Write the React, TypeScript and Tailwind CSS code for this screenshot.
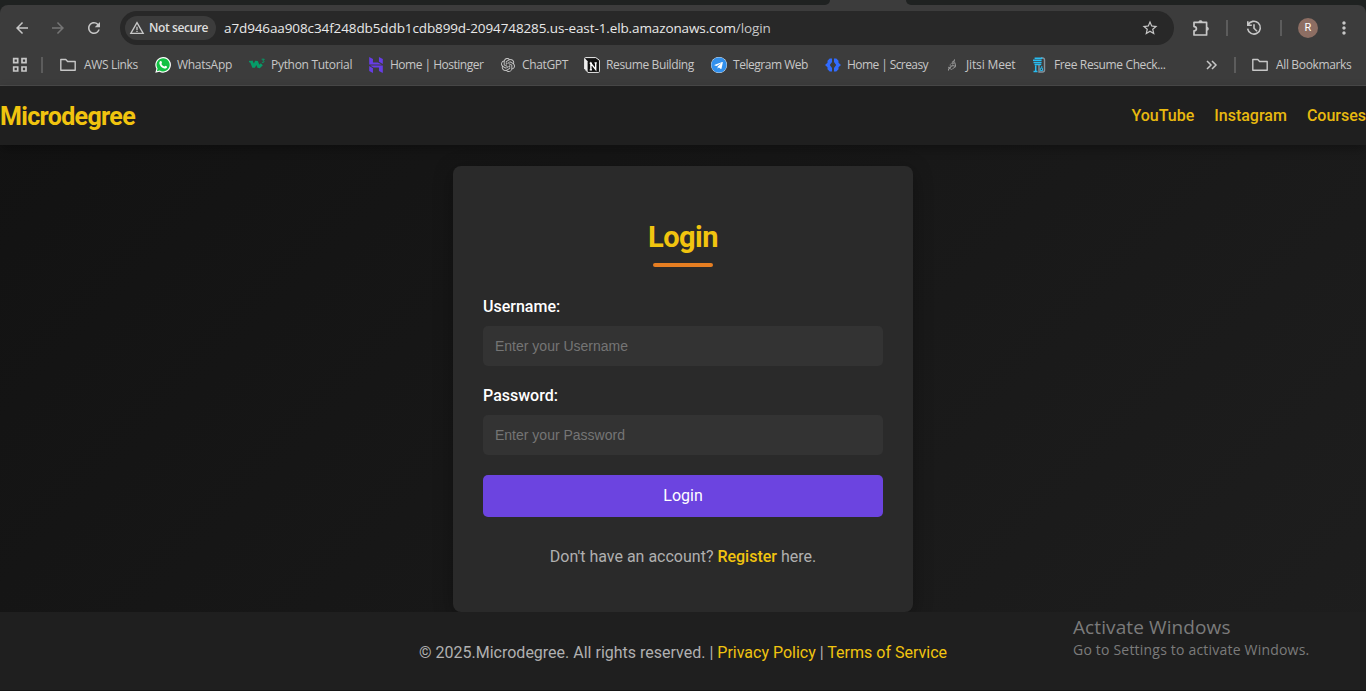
import type { ReactNode } from 'react';
import { MdArrowBack, MdArrowForward, MdRefresh, MdStarOutline, MdMoreVert, MdWarningAmber } from 'react-icons/md';
import { SiHostinger, SiOpenai, SiJitsi } from 'react-icons/si';
import { FaTelegram } from 'react-icons/fa';

function Folder() {
  return (
    <svg className="h-4 w-4" viewBox="0 0 16 16" fill="none" stroke="#c7c7c7" strokeWidth="1.4" strokeLinejoin="round">
      <path d="M.8 13V2.5h5l1.8 2h7.6V13.2H.8Z" />
    </svg>
  );
}

function Whatsapp() {
  return (
    <svg className="h-4 w-4" viewBox="0 0 16 16">
      <path d="M.3 15.8 1.4 11.8A7.8 7.8 0 1 1 4.4 14.7Z" fill="#fff" />
      <path d="M1.9 14.2 2.6 11.5A6.6 6.6 0 1 1 4.7 13.5Z" fill="#12c143" />
      <path d="M5.4 4.1c.4-.3.9-.2 1 .2l.6 1.4c.1.4-.7 1-.6 1.2.6 1.2 1.500 2 2.800 2.600.3.1.8-.9 1.200-.8l1.500.8c.4.2 0 1.200-.4 1.600-.6.5-1.500.6-2.300.4C6.700 10.800 4.900 9 4.400 6.700c-.2-1 .1-2 1-2.600Z" fill="#fff" />
    </svg>
  );
}

function W3() {
  return (
    <svg className="h-4 w-4" viewBox="0 0 16 16" fill="none" stroke="#069c68">
      <path d="M0 4.600h3.500" strokeWidth="1.500" />
      <path d="M2.200 4 4.700 10.200 7.500 4.500 9.800 10.200 12.800 7.200" strokeWidth="2.900" strokeLinejoin="bevel" />
      <path d="M12.700 2.200h2.600L13.900 3.700c2 0 1.300 2.200-1 1.600" strokeWidth="1" />
    </svg>
  );
}

function Notion() {
  return (
    <svg className="h-4 w-4" viewBox="0 0 16 16">
      <path d="M1.500.6h10.300l3.600 2.700v11.200q0 .9-.9.9H4L.6 12V1.500Q.6.6 1.500.6Z" fill="#111" stroke="#eee" strokeWidth="1" />
      <path d="m.8 1.300 2.800 2.900v10.600L.8 12Z" fill="#eee" />
      <path d="M4.400 4h10.300v10.500H4.400Z" fill="#111" />
      <path d="M6.900 12.800V6.400l4.800 6V5.800M5.700 6.200h2.300M5.700 12.900h2.300M10.500 5.900h2.300" stroke="#fff" strokeWidth="1.400" fill="none" />
    </svg>
  );
}

function Screasy() {
  return (
    <svg className="h-4 w-4" viewBox="0 0 16 16" fill="#316bff">
      <path d="M7 1.500v3.600L4.800 8 7 10.900v3.600H4.700L2.500 12.300V10.200L0 8l2.500-2.200V3.700L4.700 1.500ZM9 1.500v3.600L11.200 8 9 10.900v3.600h2.300l2.200-2.200V10.200L16 8l-2.500-2.200V3.700L11.300 1.500Z" />
    </svg>
  );
}

function ResumeCheck() {
  return (
    <svg className="h-4 w-4" viewBox="0 0 16 16" fill="none">
      <path d="M9 1h1.500q2 0 2 2v10q0 2-2 2H7V8" stroke="#85919a" strokeWidth="1.400" />
      <path d="M2.600 1.200h7.800M1 3.300h8.600M1.500 5.400h8.100M2.500 7.400h6.800M3.700 8.500v5.500M1.500 14.500h4" stroke="#27bcf1" strokeWidth="1.500" />
      <path d="M9.800 9v2.200H8.300v2.400h2.200v-2.400" stroke="#27bcf1" strokeWidth="1" />
    </svg>
  );
}

function Puzzle() {
  return (
    <svg className="h-[18px] w-[18px]" viewBox="0 0 18 18">
      <path d="M2 3.400H14.600V16H2v-4.200c3.200-.2 3.200-4 0-4.200Z" fill="none" stroke="#c7c7c7" strokeWidth="1.700" strokeLinejoin="round" />
      <path d="M6.500 3C6.500.500 10.500.500 10.500 3ZM14.800 7.700c2.700 0 2.700 4 0 4Z" fill="#c7c7c7" />
    </svg>
  );
}

function History() {
  return (
    <svg className="h-[18px] w-[18px]" viewBox="0 0 18 18" fill="none" stroke="#c7c7c7" strokeWidth="1.600">
      <path d="M2.800 2.200v4h4M3.100 6A6.400 6.400 0 1 1 2.600 9.700M9 5.200v4l3 3" />
    </svg>
  );
}

function Bookmark({ icon, label, width, tracking, gap = 'gap-1.5' }: { icon: ReactNode; label: string; width: string; tracking: string; gap?: string }) {
  return (
    <div className={`flex h-4 shrink-0 items-center ${gap} ${width}`}>
      <span className="h-4 w-4 shrink-0">{icon}</span>
      <span className={tracking}>{label}</span>
    </div>
  );
}

function Browser() {
  return (
    <div className="h-[86px] bg-[#1f2221] font-['Open_Sans','Noto_Sans',sans-serif]">
      <div className="flex h-[5px] pl-[822px]">
        <div className="h-[5px] w-[92px] bg-[#3c3c3c]">
          <div className="flex justify-between">
            <span className="h-[5px] w-2 rounded-br-[6px] bg-[#1f2221]" />
            <span className="h-[5px] w-2 rounded-bl-[6px] bg-[#1f2221]" />
          </div>
        </div>
      </div>
      <div className="h-[81px] rounded-t-lg border-b border-[#4b4b4b] bg-[#3c3c3c] pt-1.5">
        <div className="flex h-[34px] items-center text-[#c7c7c7]">
          <MdArrowBack className="ml-[13px] h-[18px] w-[18px]" />
          <MdArrowForward className="ml-[18px] h-[18px] w-[18px] text-[#757575]" />
          <MdRefresh className="ml-[18px] h-[18px] w-[18px]" />
          <div className="ml-[17px] flex h-[34px] w-[1054px] items-center rounded-full bg-[#282828] pl-[5px]">
            <div className="flex h-6 w-[91px] items-center rounded-full bg-[#3c3c3c] pl-1">
              <MdWarningAmber className="h-4 w-4" />
              <span className="ml-1 whitespace-nowrap text-[12px] font-semibold tracking-[-0.4px] text-[#dedede]">Not secure</span>
            </div>
            <span className="ml-2 whitespace-nowrap text-[13.5px] leading-5 tracking-[-0.11px] text-[#e8e8e8]">
              a7d946aa908c34f248db5ddb1cdb899d-2094748285.us-east-1.elb.amazonaws.com<span className="text-[#c7c7c7]">/login</span>
            </span>
            <MdStarOutline className="mr-[15px] ml-auto h-[18px] w-[18px]" />
          </div>
          <div className="ml-[18px]"><Puzzle /></div>
          <span className="ml-4 h-4 w-0.5 bg-[#5c5c5c]" />
          <div className="ml-[17px]"><History /></div>
          <span className="ml-[17px] h-4 w-0.5 bg-[#5c5c5c]" />
          <span className="ml-4 flex h-5 w-5 items-center justify-center rounded-full bg-[#8d6e63] font-[Roboto,sans-serif] text-[11px] text-white">R</span>
          <MdMoreVert className="ml-4 h-5 w-5" />
        </div>
        <div className="flex h-10 items-center pl-3 text-[12px] whitespace-nowrap text-[#c7c7c7]">
          <svg className="h-4 w-4" viewBox="0 0 16 16" fill="none" stroke="#c7c7c7" strokeWidth="1.700">
            <path d="M1.700 1.700h4v4h-4ZM10 1.700h4v4h-4ZM1.700 10h4v4h-4ZM10 10h4v4h-4Z" />
          </svg>
          <span className="mr-[17px] ml-[13px] h-4 w-0.5 bg-[#5c5c5c]" />
          <Bookmark icon={<Folder />} label="AWS Links" width="w-[95px]" tracking="tracking-[-0.35px]" gap="gap-2" />
          <Bookmark icon={<Whatsapp />} label="WhatsApp" width="w-[94px]" tracking="tracking-[-0.3px]" />
          <Bookmark icon={<W3 />} label="Python Tutorial" width="w-[119px]" tracking="tracking-[-0.3px]" />
          <Bookmark icon={<SiHostinger className="h-4 w-4 text-[#673de6]" />} label="Home | Hostinger" width="w-[132px]" tracking="tracking-[-0.5px]" />
          <Bookmark icon={<SiOpenai className="m-px h-[14px] w-[14px]" />} label="ChatGPT" width="w-[84px]" tracking="tracking-[-0.35px]" />
          <Bookmark icon={<Notion />} label="Resume Building" width="w-[127px]" tracking="tracking-[-0.38px]" />
          <Bookmark icon={<FaTelegram className="h-4 w-4 rounded-full bg-white text-[#3290ec]" />} label="Telegram Web" width="w-[114px]" tracking="tracking-[-0.47px]" />
          <Bookmark icon={<Screasy />} label="Home | Screasy" width="w-[119px]" tracking="tracking-[-0.58px]" />
          <Bookmark icon={<SiJitsi className="m-0.5 h-3 w-3" />} label="Jitsi Meet" width="w-[88px]" tracking="tracking-[-0.15px]" />
          <Bookmark icon={<ResumeCheck />} label="Free Resume Check..." width="w-[174px]" tracking="tracking-[-0.37px]" />
          <svg className="h-3 w-3" viewBox="0 0 12 12" fill="none" stroke="#c7c7c7" strokeWidth="1.500"><path d="m1 2 4 4-4 4M6 2l4 4-4 4" /></svg>
          <span className="mr-4 ml-4 h-4 w-0.5 bg-[#5c5c5c]" />
          <Bookmark icon={<Folder />} label="All Bookmarks" width="w-[110px]" tracking="tracking-[-0.35px]" gap="gap-2" />
        </div>
      </div>
    </div>
  );
}

function Field({ label, type }: { label: string; type: string }) {
  return (
    <label className="mb-5 block">
      <span className="mb-[9px] block h-5 text-[16px] leading-[19px] font-medium text-white">{label}:</span>
      <input type={type} placeholder={`Enter your ${label}`} className="block h-10 w-full rounded-[5px] bg-[#333] px-3 font-['Liberation_Sans',Arial,sans-serif] text-[14px] text-white placeholder:text-[#757575]" />
    </label>
  );
}

export default function App() {
  return (
    <div className="relative flex h-[691px] w-[1366px] flex-col overflow-hidden">
      <Browser />
      <div className="flex flex-1 flex-col bg-linear-135 from-[#121212] to-[#1e1e1e] font-[Roboto,sans-serif] text-[16px]">
        <header className="flex h-[59px] items-center justify-between bg-[#1f1f1f] shadow-[0_4px_10px_rgba(0,0,0,0.3)]">
          <div className="pt-0.5 text-[25px] font-bold tracking-[-0.65px] text-[#f1c40f]">Microdegree</div>
          <nav className="flex gap-5 font-medium text-[#e8b90f]">
            <a href="#">YouTube</a><a href="#">Instagram</a><a href="#">Courses</a>
          </nav>
        </header>
        <main className="flex h-[467px] justify-center pt-[21px]">
          <section className="h-[446px] w-[460px] rounded-lg bg-[#2a2a2a] px-[30px] pt-[51px] shadow-[0_4px_20px_rgba(0,0,0,0.3)]">
            <h1 className="text-center text-[29px] leading-10 font-bold tracking-[-0.5px] text-[#f1c40f]">Login</h1>
            <div className="mx-auto mt-1.5 h-1 w-[60px] rounded-sm bg-[#e67e22]" />
            <form className="mt-[30px]">
              <Field label="Username" type="text" />
              <Field label="Password" type="password" />
              <button type="button" className="h-[42px] w-full rounded-[5px] bg-[#6c44e0] text-white">Login</button>
            </form>
            <p className="mt-7 text-center text-[#b0b0b0]">Don't have an account? <a href="#" className="font-medium text-[#f1c40f]">Register</a> here.</p>
          </section>
        </main>
        <footer className="flex h-[79px] items-center justify-center border-b border-[#151515] bg-[#1f1f1f] pt-[3px] text-[#b0b0b0]">
          <p>© 2025.Microdegree. All rights reserved. | <a href="#" className="text-[#f1c40f]">Privacy Policy</a> | <a href="#" className="text-[#f1c40f]">Terms of Service</a></p>
        </footer>
      </div>
      <div className="absolute top-[614px] left-[1073px] font-['Open_Sans','Noto_Sans',sans-serif] whitespace-nowrap text-[#7b7b7b]">
        <div className="text-[19px] leading-[26px] tracking-[0.1px]">Activate Windows</div>
        <div className="text-[14px] leading-5 tracking-[0.2px]">Go to Settings to activate Windows.</div>
      </div>
    </div>
  );
}
